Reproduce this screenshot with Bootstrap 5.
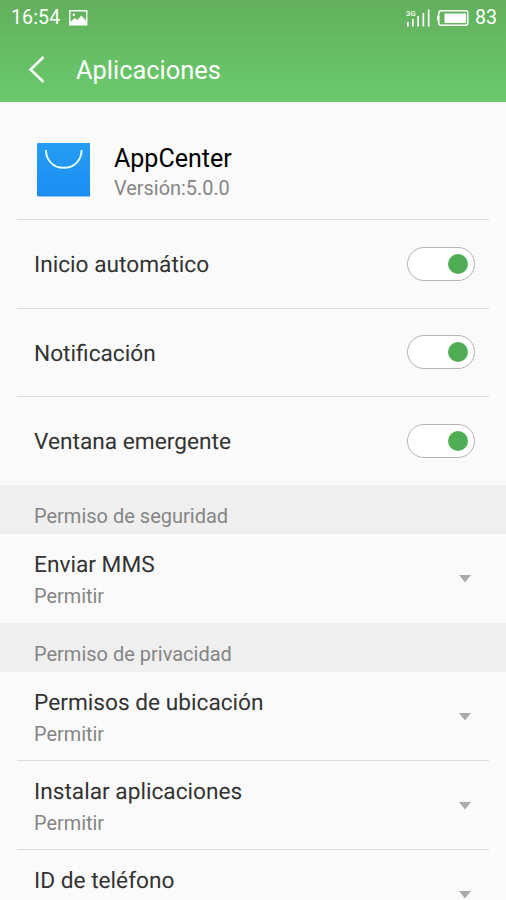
<!DOCTYPE html>
<html lang="es">
<head>
<meta charset="utf-8">
<meta name="viewport" content="width=device-width, initial-scale=1">
<title>Aplicaciones</title>
<link href="https://cdn.jsdelivr.net/npm/bootstrap@5.3.0/dist/css/bootstrap.min.css" rel="stylesheet">
<style>
body{font-family:Roboto,"Liberation Sans",sans-serif;background:#fafafa;color:#333;height:900px;overflow:hidden}
svg{display:block;flex:none}
.topbar{height:102px;background:linear-gradient(#62af5b,#6acb6d);color:#fff;margin-bottom:1px}
.status{height:36px;font-size:19.6px;line-height:36px;padding:0 9px 0 11px}
.clock{letter-spacing:.1px;width:58px}
.percent{margin-left:6px}
.titlebar{height:66px;padding-left:28px}
.titlebar h1{font-size:25.4px;font-weight:400;line-height:30px;margin:2px 0 0 31px}
.rule{border-bottom:1px solid #dcdcdc;margin:0 17px;padding:0 14px 0 17px}
.app-head{height:117px;padding-left:19.500px;padding-top:18px}
.app-text{margin:5px 0 0 24px}
.app-name{font-size:25px;line-height:30px;color:#000}
.sub{font-size:19.9px;line-height:26px;color:#858585;margin-top:3.5px}
.app-text .sub{margin-top:2px}
.setting{height:88.5px}
.setting .label{padding-top:3px}
.label{font-size:22.7px;line-height:30px;text-rendering:geometricPrecision}
.perm{height:89px}
.perm-text{padding-top:4px}
.last-row{border-color:transparent}
.setting.last-row{height:88px}
.toggle{width:68px;height:34px;border:1.5px solid #b5b5b5;border-radius:17px;background:#fff;padding-right:6px}
.knob{width:20px;height:20px;border-radius:50%;background:#4fae53}
.section{height:49px;background:#efefef;font-size:20px;line-height:26px;color:#858585;padding:18px 34px 0}
.arrow{margin:1px 4px 0 0}
.last-text{height:63.5px}
</style>
</head>
<body class="d-flex flex-column">
<header class="topbar flex-shrink-0">
  <div class="status d-flex align-items-center justify-content-between">
    <div class="d-flex align-items-center"><span class="clock">16:54</span>
      <svg width="19" height="16" viewBox="0 0 19 16"><path d="M.75.75h17v14h-17z" fill="none" stroke="#fff" stroke-width="1.4"/><path d="M1 14.5V12l5-4 2 2 4.500-4.500L18 12v2.500z" fill="#fff"/><circle cx="4.800" cy="4.700" r="1.300" fill="#fff"/></svg>
    </div>
    <div class="d-flex align-items-center">
      <svg width="63" height="20" viewBox="0 0 63 20" fill="#fff"><text x="0" y="7.500" font-size="7.500" font-weight="500" textLength="9.500">3G</text><path d="M1 14h1.700v4.500H1zm5-3h1.700v7.500H6zm5.300-3h1.700v10.500h-1.700zm5.200-3h1.700v13.500h-1.700zM21.800 1.500h1.700v17h-1.700z"/><rect x="32.800" y="2.800" width="29" height="14.400" rx="2.200" fill="none" stroke="#fff" stroke-width="1.500"/><path d="M31 7.500h1.500v5H31zM38.500 5.500H60v9.500H38.500z"/></svg>
      <span class="percent">83</span>
    </div>
  </div>
  <div class="titlebar d-flex align-items-center">
    <svg width="17" height="27" viewBox="0 0 17 27"><path d="M15.500 1 2.500 13.500 15.500 26" fill="none" stroke="#fff" stroke-width="2.500"/></svg>
    <h1>Aplicaciones</h1>
  </div>
</header>
<main>
  <section class="rule app-head d-flex align-items-center">
    <svg width="53.500" height="53.500" viewBox="0 0 54 54"><defs><linearGradient id="bag" x2="0" y2="1"><stop stop-color="#259df1"/><stop offset="1" stop-color="#1b8df5"/></linearGradient></defs><rect width="54" height="54" rx="1.500" fill="url(#bag)"/><path d="M9 7c0 10 7 18 18 18S45 17 45 7" fill="none" stroke="#e3fbff" stroke-width="2"/></svg>
    <div class="app-text"><div class="app-name">AppCenter</div><div class="sub">Versión:5.0.0</div></div>
  </section>
  <section class="rule setting d-flex align-items-center justify-content-between"><span class="label">Inicio automático</span><span class="toggle d-flex align-items-center justify-content-end"><span class="knob"></span></span></section>
  <section class="rule setting d-flex align-items-center justify-content-between"><span class="label">Notificación</span><span class="toggle d-flex align-items-center justify-content-end"><span class="knob"></span></span></section>
  <section class="rule setting last-row d-flex align-items-center justify-content-between"><span class="label">Ventana emergente</span><span class="toggle d-flex align-items-center justify-content-end"><span class="knob"></span></span></section>
  <div class="section">Permiso de seguridad</div>
  <section class="rule perm last-row d-flex align-items-center justify-content-between"><div class="perm-text"><div class="label">Enviar MMS</div><div class="sub">Permitir</div></div><svg class="arrow" width="12" height="8" viewBox="0 0 12 8"><path d="M0 0h12L6 7.500z" fill="#aaa"/></svg></section>
  <div class="section">Permiso de privacidad</div>
  <section class="rule perm d-flex align-items-center justify-content-between"><div class="perm-text"><div class="label">Permisos de ubicación</div><div class="sub">Permitir</div></div><svg class="arrow" width="12" height="8" viewBox="0 0 12 8"><path d="M0 0h12L6 7.500z" fill="#aaa"/></svg></section>
  <section class="rule perm d-flex align-items-center justify-content-between"><div class="perm-text"><div class="label">Instalar aplicaciones</div><div class="sub">Permitir</div></div><svg class="arrow" width="12" height="8" viewBox="0 0 12 8"><path d="M0 0h12L6 7.500z" fill="#aaa"/></svg></section>
  <section class="rule perm d-flex align-items-center justify-content-between"><div class="perm-text last-text"><div class="label">ID de teléfono</div></div><svg class="arrow" width="12" height="8" viewBox="0 0 12 8"><path d="M0 0h12L6 7.500z" fill="#aaa"/></svg></section>
</main>
<script src="https://cdn.jsdelivr.net/npm/bootstrap@5.3.0/dist/js/bootstrap.bundle.min.js"></script>
</body>
</html>
